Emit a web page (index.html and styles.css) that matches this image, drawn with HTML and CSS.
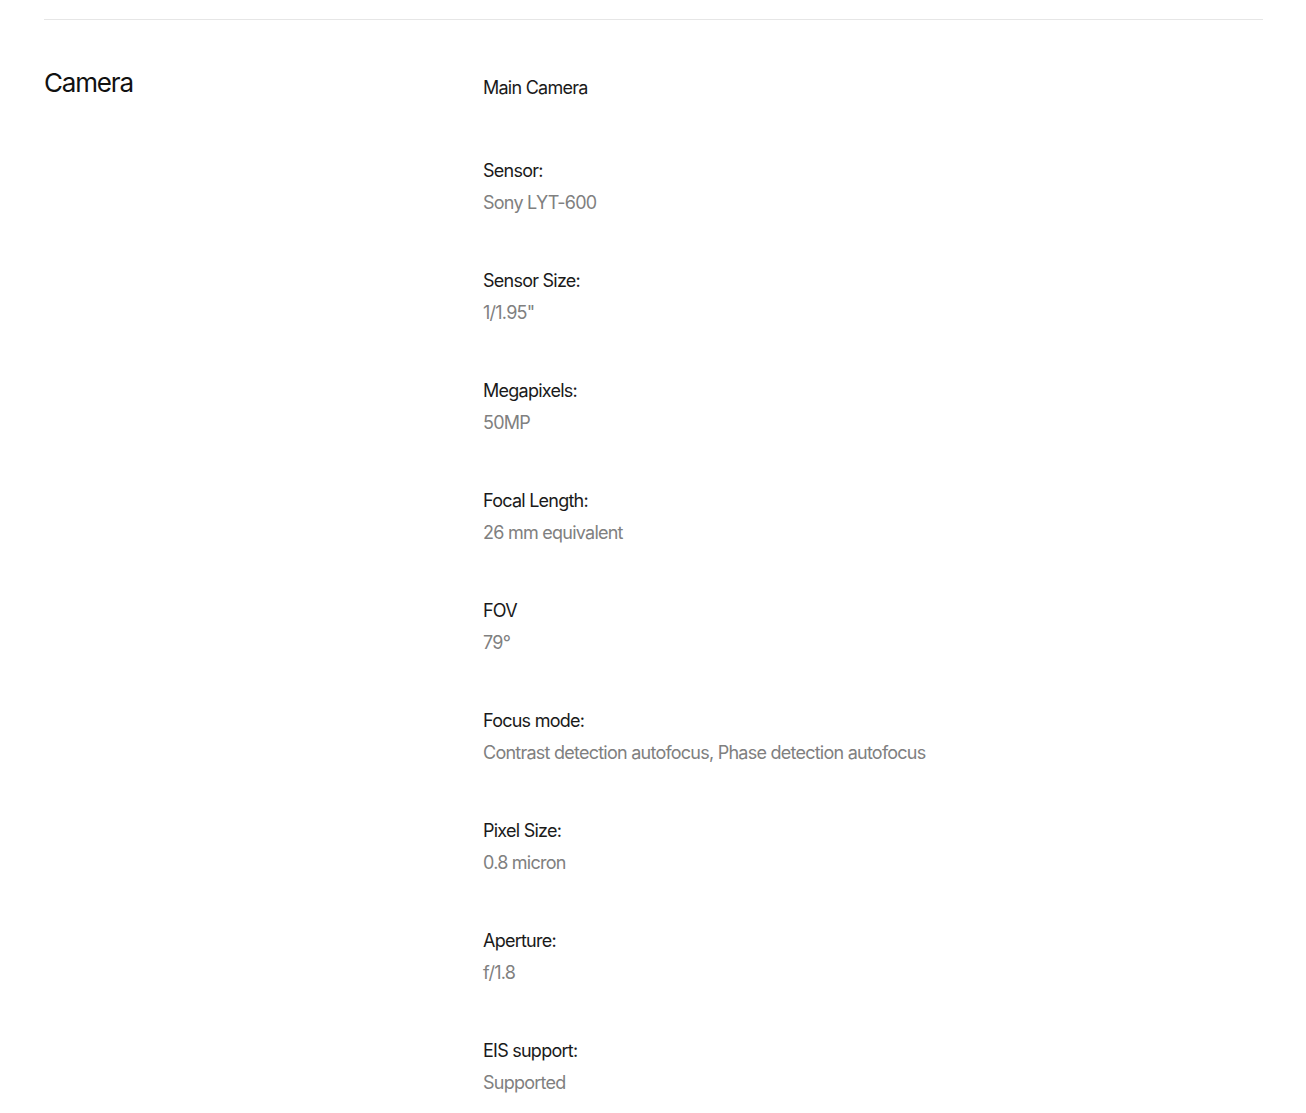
FILE: index.html
```html
<!DOCTYPE html>
<html lang="en">
<head>
  <meta charset="UTF-8" />
  <meta name="viewport" content="width=device-width, initial-scale=1.0" />
  <title>Specs - Camera</title>
  <link rel="stylesheet" href="styles.css">
</head>
<body>
  <div class="page">
    <section class="spec-section">
      <h2 class="section-title">Camera</h2>
      <div class="spec-list">
        <div class="group-title">Main Camera</div>
        <div class="spec-item">
          <div class="spec-label">Sensor:</div>
          <div class="spec-value">Sony LYT-600</div>
        </div>
        <div class="spec-item">
          <div class="spec-label">Sensor Size:</div>
          <div class="spec-value">1/1.95"</div>
        </div>
        <div class="spec-item">
          <div class="spec-label">Megapixels:</div>
          <div class="spec-value">50MP</div>
        </div>
        <div class="spec-item">
          <div class="spec-label">Focal Length:</div>
          <div class="spec-value">26 mm equivalent</div>
        </div>
        <div class="spec-item">
          <div class="spec-label">FOV</div>
          <div class="spec-value">79°</div>
        </div>
        <div class="spec-item">
          <div class="spec-label">Focus mode:</div>
          <div class="spec-value">Contrast detection autofocus, Phase detection autofocus</div>
        </div>
        <div class="spec-item">
          <div class="spec-label">Pixel Size:</div>
          <div class="spec-value">0.8 micron</div>
        </div>
        <div class="spec-item">
          <div class="spec-label">Aperture:</div>
          <div class="spec-value">f/1.8</div>
        </div>
        <div class="spec-item">
          <div class="spec-label">EIS support:</div>
          <div class="spec-value">Supported</div>
        </div>
      </div>
    </section>
  </div>
</body>
</html>
```

FILE: styles.css
```css
* { margin: 0; padding: 0; box-sizing: border-box; }
body {
  background: #fff;
  color: #1a1a1a;
  font-family: Inter, "Noto Sans", sans-serif;
}
.page {
  padding: 19px 43px 0 44px;
}
.spec-section {
  display: grid;
  grid-template-columns: 439px 1fr;
  border-top: 1px solid #e6e6e6;
  padding-top: 52px;
}
.section-title {
  font-size: 26px;
  font-weight: 400;
  line-height: 22px;
  letter-spacing: -0.045em;
  color: #111;
}
.group-title, .spec-label, .spec-value {
  font-size: 18px;
  line-height: 32px;
  letter-spacing: -0.042em;
}
.group-title { margin-bottom: 51px; color: #1a1a1a; }
.spec-item { margin-bottom: 46px; }
.spec-label { color: #1a1a1a; }
.spec-value { color: #808080; }
```
